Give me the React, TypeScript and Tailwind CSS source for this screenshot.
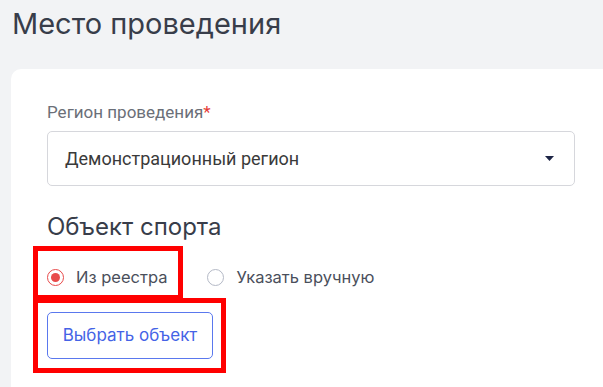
export default function App() {
  return (
    <div className="relative h-[387px] w-[603px] overflow-hidden bg-[#f2f3f5] font-['Inter',sans-serif]">
      <h1 className="pl-3 pt-[5px] text-[29px] leading-[38px] text-[#383d4a]">Место проведения</h1>
      <div className="ml-[11px] mt-[26px] h-[400px] rounded-tl-[10px] bg-white pl-[36px] pr-[28px] pt-[33px]">
        <label className="block font-['Roboto',sans-serif] text-[17px] leading-[20px] text-[#6b6f78]">
          Регион проведения<span className="text-[#e53935]">*</span>
        </label>
        <div className="mt-[9px] flex h-[55px] items-center justify-between rounded-[5px] border border-[#d6d7dc] pl-[17px] pr-[20px]">
          <span className="font-['Roboto',sans-serif] text-[18px] text-[#3a3a3a]">Демонстрационный регион</span>
          <svg width="9" height="5" viewBox="0 0 9 5" aria-hidden="true">
            <path d="M0 0h9L4.5 5z" fill="#1d2545" />
          </svg>
        </div>
        <h2 className="mt-[26px] text-[24px] leading-[30px] text-[#383d4a]">Объект спорта</h2>
        <div className="mt-[23px] flex h-[24px] items-center gap-[40px]">
          <label className="flex items-center gap-[12px]">
            <span className="flex h-[17px] w-[17px] items-center justify-center rounded-full border border-[#e84a4a]">
              <span className="h-[9px] w-[9px] rounded-full bg-[#e84a4a]" />
            </span>
            <span className="text-[16.5px] text-[#4a4f5b]">Из реестра</span>
          </label>
          <label className="flex items-center gap-[12px]">
            <span className="h-[17px] w-[17px] rounded-full border border-[#b4b9c6]" />
            <span className="text-[16.5px] text-[#4a4f5b]">Указать вручную</span>
          </label>
        </div>
        <button className="mt-[23px] h-[47px] w-[166px] rounded-[5px] border border-[#5a78ee] text-[17px] text-[#4563e6]">
          Выбрать объект
        </button>
      </div>
      <div className="absolute left-[33px] top-[246px] h-[54px] w-[150px] border-[5px] border-[#ff0000]" />
      <div className="absolute left-[33px] top-[298px] h-[75px] w-[193px] border-[5px] border-[#ff0000]" />
    </div>
  );
}
